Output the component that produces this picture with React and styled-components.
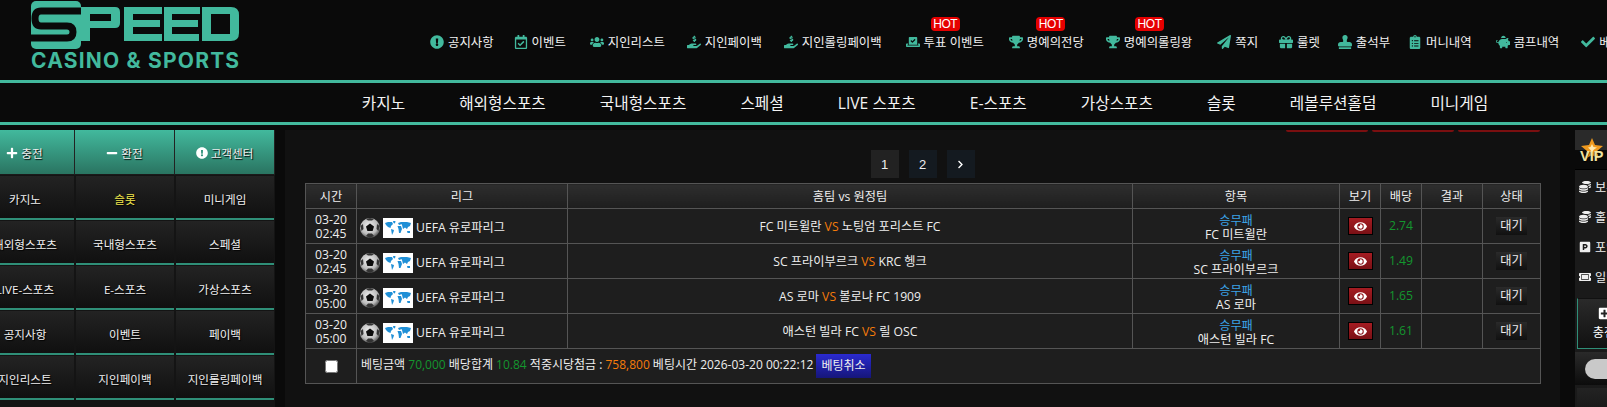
import React from "react";
import styled, { createGlobalStyle } from "styled-components";
import {
  FaExclamationCircle, FaRegCalendarCheck, FaUsers, FaHandHoldingUsd, FaVoteYea, FaTrophy,
  FaPaperPlane, FaGift, FaStamp, FaClipboardList, FaPiggyBank, FaCheck, FaPlus, FaMinus, FaEye,
  FaCoins, FaParking, FaTicketAlt, FaChevronRight, FaPlusSquare,
} from "react-icons/fa";

const TEAL = "#42b99d";

const GlobalStyle = createGlobalStyle`
  html, body { margin: 0; padding: 0; background: #0a0a0a; overflow: hidden; }
  body { font-family: "Open Sans", "Noto Sans CJK KR", "Liberation Sans", sans-serif; color: #fff; }
`;

const Page = styled.div`
  width: 1607px;
  height: 407px;
  overflow: hidden;
`;

const Header = styled.header`
  height: 80px;
  display: flex;
  align-items: flex-start;
  background: #0a0a0a;
  border-bottom: 3px solid ${TEAL};
`;

const Logo = styled.div`
  width: 430px;
  flex: none;
  padding-left: 30px;
  box-sizing: border-box;
`;

const LogoSub = styled.div`
  margin-left: 1px;
  font-family: "Inter", "Liberation Sans", sans-serif;
  font-weight: 700;
  font-size: 21px;
  line-height: 24px;
  letter-spacing: 1.2px;
  color: ${TEAL};
  white-space: nowrap;
`;

const TopMenu = styled.nav`
  display: flex;
  gap: 22px;
  padding-top: 33px;
  white-space: nowrap;
`;

const TopItem = styled.a`
  position: relative;
  display: flex;
  align-items: center;
  gap: 4px;
  height: 18px;
  margin-left: ${(p) => p.$nudge || 0}px;
  font-size: 12.4px;
  color: #f2f2f2;
  svg { color: ${TEAL}; font-size: 14px; flex: none; }
`;

const Hot = styled.span`
  position: absolute;
  top: -16px;
  left: 50%;
  margin-left: ${(p) => p.$shift - 14}px;
  width: 29px;
  height: 14px;
  border-radius: 4px;
  background: #e60000;
  color: #fff;
  font-family: "Liberation Sans", sans-serif;
  font-size: 12px;
  letter-spacing: -0.4px;
  line-height: 14px;
  text-align: center;
`;

const GameNav = styled.nav`
  height: 39px;
  display: flex;
  justify-content: center;
  align-items: center;
  gap: 54px;
  padding-left: 243px;
  background: #0a0a0a;
  border-bottom: 3px solid ${TEAL};
  font-size: 15.7px;
  color: #f4f4f4;
  white-space: nowrap;
`;

const Body = styled.div`
  display: flex;
  height: 282px;
  padding-top: 5px;
  box-sizing: border-box;
`;

const SideMenu = styled.aside`
  flex: none;
  width: 300px;
  margin-left: -25px;
  display: grid;
  grid-template-columns: repeat(3, 100px);
  grid-auto-rows: 45px;
  align-content: start;
  background: #141414;
`;

const ActionCell = styled.a`
  display: flex;
  align-items: center;
  justify-content: center;
  gap: 3px;
  box-sizing: border-box;
  padding-top: 1px;
  border-right: 1px solid #222;
  border-bottom: 1px solid #1a1a1a;
  background: linear-gradient(#42b99d, #2a7461);
  font-size: 11.6px;
  color: #eee;
  text-shadow: 1px 1px 1px #000;
  svg { color: #fff; font-size: 12px; }
`;

const MenuCell = styled.a`
  display: flex;
  align-items: center;
  justify-content: center;
  box-sizing: border-box;
  margin: 1px 1px 0 1px;
  padding-top: 3px;
  border-bottom: 2px solid #2f8f78;
  background: linear-gradient(#232323, #101010);
  font-size: 11.6px;
  color: ${(p) => (p.$active ? "#f2e94e" : "#f0f0f0")};
  white-space: nowrap;
  text-shadow: 1px 1px 1px #000;
`;

const Content = styled.main`
  flex: none;
  width: 1275px;
  margin-left: 10px;
  background: #111;
  box-sizing: border-box;
  padding: 0 20px;
`;

const RedTabs = styled.div`
  display: flex;
  justify-content: flex-end;
  gap: 4px;
  height: 2px;
`;

const RedTab = styled.span`
  width: 82px;
  background: #7a0f10;
  border-radius: 0 0 5px 5px;
`;

const Pager = styled.div`
  display: flex;
  justify-content: center;
  gap: 10px;
  padding: 18px 0 5px;
`;

const PageBtn = styled.a`
  width: 28px;
  height: 28px;
  display: flex;
  align-items: center;
  justify-content: center;
  background: ${(p) => (p.$active ? "#222" : "#141a20")};
  color: #eee;
  font-size: 13px;
  font-family: "Liberation Sans", sans-serif;
  svg { font-size: 9px; color: #fff; }
`;

const BetTable = styled.table`
  width: 1235px;
  border-collapse: collapse;
  table-layout: fixed;
  font-size: 12.2px;
  color: #eee;
  background: #1e1e1e;
  th, td { border: 1px solid #555; padding: 0; text-align: center; }
  th { height: 24px; font-weight: 400; background: linear-gradient(#2e2e2e, #1e1e1e); }
  tbody tr { height: 35px; }
  td { line-height: 14px; }
`;

const TextCell = styled.td`
  && { padding-top: ${(p) => p.$top || 2}px; }
`;

const LeagueCell = styled.div`
  display: flex;
  align-items: center;
  gap: 3px;
  padding-left: 3px;
`;

const BallIcon = styled.svg`
  width: 20px;
  height: 20px;
  flex: none;
`;

const WorldFlag = styled.svg`
  width: 30px;
  height: 20px;
  flex: none;
  background: #fff;
`;

const Vs = styled.span`
  color: #f57c0a;
`;

const MarketName = styled.span`
  color: #3ba3e8;
`;

const EyeBtn = styled.a`
  display: inline-flex;
  align-items: center;
  justify-content: center;
  box-sizing: border-box;
  width: 25px;
  height: 18px;
  vertical-align: middle;
  background: linear-gradient(#a51c22, #7a1015);
  border: 1px solid #000;
  color: #fff;
  font-size: 13px;
`;

const Odds = styled.span`
  color: #14962e;
`;

const StatusBtn = styled.a`
  display: inline-block;
  width: 31px;
  height: 18px;
  line-height: 18px;
  vertical-align: middle;
  background: linear-gradient(#2a2a2a, #111);
  color: #eee;
`;

const Checkbox = styled.input`
  width: 13px;
  height: 13px;
  margin: 0;
  vertical-align: middle;
`;

const SummaryCell = styled.td`
  && { text-align: left; padding-left: 4px; font-size: 12px; }
`;

const Green = styled.span`
  color: #14962e;
`;

const Orange = styled.span`
  color: #f57c0a;
`;

const CancelBtn = styled.a`
  display: inline-block;
  padding: 0 5px;
  height: 24px;
  line-height: 24px;
  vertical-align: middle;
  background: linear-gradient(#2a2ad0, #16167a);
  color: #eee;
`;

const RightBar = styled.aside`
  flex: none;
  width: 80px;
  margin-left: 15px;
  background: #1a1a1a;
`;

const VipBox = styled.div`
  position: relative;
  height: 40px;
  background: linear-gradient(#2a2a2a 50%, #0a0a0a 50%);
  border-bottom: 1px solid #000;
  box-sizing: border-box;
  margin-bottom: 2px;
  padding: 8px 0 0 5px;
`;

const VipText = styled.span`
  position: absolute;
  left: 5px;
  top: 18px;
  font-family: "Liberation Sans", sans-serif;
  font-weight: 700;
  font-size: 14.5px;
  color: #f0e3a0;
  text-shadow: 0 1px 1px #000;
`;

const RightLine = styled.div`
  display: flex;
  align-items: center;
  gap: 4px;
  height: 30px;
  padding-left: 4px;
  font-size: 12.2px;
  white-space: nowrap;
  color: #eee;
  svg { font-size: 12px; color: #eee; flex: none; }
`;

const ChargeBox = styled.div`
  margin: 6px 0 0 2px;
  width: 54px;
  height: 51px;
  box-sizing: border-box;
  border: 1px solid #2f8f78;
  border-top-color: #111;
  background: linear-gradient(#2a2a2a, #111);
  display: flex;
  flex-direction: column;
  align-items: center;
  justify-content: center;
  gap: 3px;
  font-size: 12.2px;
  svg { font-size: 13px; color: #fff; }
`;

const ToggleRow = styled.div`
  margin-top: 3px;
  height: 33px;
  background: linear-gradient(#2a2a2a, #0c0c0c);
  padding: 7px 0 0 10px;
  box-sizing: border-box;
`;

const TogglePill = styled.div`
  height: 20px;
  border-radius: 10px 0 0 10px;
  background: #c9c9c9;
`;

const BottomBox = styled.div`
  margin: 3px 0 0 2px;
  height: 30px;
  background: linear-gradient(#232323, #151515);
`;

const topItems = [
  { Icon: FaExclamationCircle, label: "공지사항" },
  { Icon: FaRegCalendarCheck, label: "이벤트", nudge: -2 },
  { Icon: FaUsers, label: "지인리스트", nudge: 2 },
  { Icon: FaHandHoldingUsd, label: "지인페이백" },
  { Icon: FaHandHoldingUsd, label: "지인롤링페이백" },
  { Icon: FaVoteYea, label: "투표 이벤트", nudge: 2, hot: 0 },
  { Icon: FaTrophy, label: "명예의전당", nudge: 3, hot: 4 },
  { Icon: FaTrophy, label: "명예의롤링왕", hot: 0 },
  { Icon: FaPaperPlane, label: "쪽지", nudge: 3 },
  { Icon: FaGift, label: "룰렛", nudge: -1 },
  { Icon: FaStamp, label: "출석부", nudge: -4 },
  { Icon: FaClipboardList, label: "머니내역", nudge: -4 },
  { Icon: FaPiggyBank, label: "콤프내역", nudge: 2 },
  { Icon: FaCheck, label: "베팅내역" },
];

const games = ["카지노", "해외형스포츠", "국내형스포츠", "스페셜", "LIVE 스포츠", "E-스포츠", "가상스포츠", "슬롯", "레볼루션홀덤", "미니게임"];

const menu = ["카지노", "슬롯", "미니게임", "해외형스포츠", "국내형스포츠", "스페셜", "LIVE-스포츠", "E-스포츠", "가상스포츠", "공지사항", "이벤트", "페이백", "지인리스트", "지인페이백", "지인롤링페이백"];

const bets = [
  ["03-20", "02:45", "FC 미트윌란", "노팅엄 포리스트 FC", "FC 미트윌란", "2.74"],
  ["03-20", "02:45", "SC 프라이부르크", "KRC 헹크", "SC 프라이부르크", "1.49"],
  ["03-20", "05:00", "AS 로마", "볼로냐 FC 1909", "AS 로마", "1.65"],
  ["03-20", "05:00", "애스턴 빌라 FC", "릴 OSC", "애스턴 빌라 FC", "1.61"],
];

const LogoMark = () => (
  <svg width="210" height="49" viewBox="0 0 210 49" style={{ display: "block" }}>
    <rect x="1" y="1" width="50" height="48" rx="5" fill={TEAL} />
    <path fill="none" stroke="#0a0a0a" strokeWidth="7" d="M51 11H11Q5 11 5 18.5Q5 26 11 26H37Q43 26 43 32Q43 38 37 38H1" />
    <path fill={TEAL} fillRule="evenodd" d="M51 7H85Q90 7 90 12V23Q90 28 85 28H60V41H51ZM60 14V21H81V14Z" />
    <path fill={TEAL} d="M94 7H132V14H103V20H130V27H103V34H132V41H94Z" />
    <path fill={TEAL} d="M134 7H170V14H142V20H168V27H142V34H169V41H134Z" />
    <path fill={TEAL} fillRule="evenodd" d="M172 7H201Q209 7 209 15V33Q209 41 201 41H172ZM181 14V34H200V14Z" />
  </svg>
);

const SoccerBall = () => (
  <BallIcon viewBox="0 0 20 20">
    <defs>
      <radialGradient id="ballShade" cx="45%" cy="40%" r="60%">
        <stop offset="0%" stopColor="#f2f2f2" />
        <stop offset="70%" stopColor="#bbb" />
        <stop offset="100%" stopColor="#555" />
      </radialGradient>
    </defs>
    <circle cx="10" cy="10" r="10" fill="url(#ballShade)" />
    <path fill="#0c0c0c" d="M10 5.5L14 8.5L12.6 13H7.4L6 8.5Z" />
    <path fill="#333" d="M6 1L10 0L14 1L12 2.5H8ZM0.5 8L3 6L3.5 11L1.5 13ZM19.5 8L17 6L16.5 11L18.5 13ZM6 18L8 15.5H12L14 18L10 20Z" />
  </BallIcon>
);

const WorldMap = () => (
  <WorldFlag viewBox="0 0 30 20">
    <path fill="#1f8fd6" d="M2 5L5 4L9 4L10 6L8 8L7.5 10L5 9L3 7ZM10 3L12.5 3L12 5.5L10.5 5ZM8 11L11 12L10.5 14L9 17L8.5 14ZM15 5L18 4L19 6L16 7ZM14.5 8L18 8L19 11L17.5 15L16 15L15.5 11ZM18 4L24 4L28 5L27 8L25 9L24 11L22 9.5L20 11L19 7ZM24 13L27 13L27 15L24.5 15Z" />
  </WorldFlag>
);

const VipStar = () => (
  <svg width="24" height="22" viewBox="0 0 24 22">
    <path fill="#f09a1e" d="M12 0L15 7L23 8L17 13L19 21L12 17L5 21L7 13L1 8L9 7Z" />
    <path fill="#ffe9b0" d="M12 6L13.5 9L17 9.5L14 11.5L12 14L10 11.5L8 9.5L10.5 9Z" />
  </svg>
);

const App = () => (
  <Page>
    <GlobalStyle />
    <Header>
      <Logo>
        <LogoMark />
        <LogoSub>CASINO &amp; SPORTS</LogoSub>
      </Logo>
      <TopMenu>
        {topItems.map(({ Icon, label, nudge, hot }) => (
          <TopItem key={label} $nudge={nudge}>
            {hot !== undefined && <Hot $shift={hot}>HOT</Hot>}
            <Icon />
            {label}
          </TopItem>
        ))}
      </TopMenu>
    </Header>
    <GameNav>
      {games.map((g) => <a key={g}>{g}</a>)}
    </GameNav>
    <Body>
      <SideMenu>
        <ActionCell><FaPlus />충전</ActionCell>
        <ActionCell><FaMinus />환전</ActionCell>
        <ActionCell><FaExclamationCircle />고객센터</ActionCell>
        {menu.map((m) => <MenuCell key={m} $active={m === "슬롯"}>{m}</MenuCell>)}
      </SideMenu>
      <Content>
        <RedTabs><RedTab /><RedTab /><RedTab /></RedTabs>
        <Pager>
          <PageBtn $active>1</PageBtn>
          <PageBtn>2</PageBtn>
          <PageBtn><FaChevronRight /></PageBtn>
        </Pager>
        <BetTable>
          <colgroup>
            <col style={{ width: 51 }} /><col style={{ width: 211 }} /><col style={{ width: 565 }} /><col style={{ width: 207 }} />
            <col style={{ width: 41 }} /><col style={{ width: 41 }} /><col style={{ width: 61 }} /><col style={{ width: 58 }} />
          </colgroup>
          <thead>
            <tr><th>시간</th><th>리그</th><th>홈팀 vs 원정팀</th><th>항목</th><th>보기</th><th>배당</th><th>결과</th><th>상태</th></tr>
          </thead>
          <tbody>
            {bets.map((b, i) => (
              <tr key={i}>
                <TextCell>{b[0]}<br />{b[1]}</TextCell>
                <TextCell $top={3}>
                  <LeagueCell>
                    <SoccerBall />
                    <WorldMap />
                    UEFA 유로파리그
                  </LeagueCell>
                </TextCell>
                <TextCell>{b[2]} <Vs>VS</Vs> {b[3]}</TextCell>
                <TextCell $top={3}><MarketName>승무패</MarketName><br />{b[4]}</TextCell>
                <td><EyeBtn><FaEye /></EyeBtn></td>
                <td><Odds>{b[5]}</Odds></td>
                <td></td>
                <td><StatusBtn>대기</StatusBtn></td>
              </tr>
            ))}
            <tr>
              <td><Checkbox type="checkbox" /></td>
              <SummaryCell colSpan={7}>
                베팅금액 <Green>70,000</Green> 배당합계 <Green>10.84</Green> 적중시당첨금 : <Orange>758,800</Orange> 베팅시간 2026-03-20 00:22:12 <CancelBtn>베팅취소</CancelBtn>
              </SummaryCell>
            </tr>
          </tbody>
        </BetTable>
      </Content>
      <RightBar>
        <VipBox><VipStar /><VipText>VIP</VipText></VipBox>
        <RightLine><FaCoins />보유머니</RightLine>
        <RightLine><FaCoins />홀덤머니</RightLine>
        <RightLine><FaParking />포인트</RightLine>
        <RightLine><FaTicketAlt />일반쿠폰</RightLine>
        <ChargeBox><FaPlusSquare />충전</ChargeBox>
        <ToggleRow><TogglePill /></ToggleRow>
        <BottomBox />
      </RightBar>
    </Body>
  </Page>
);

export default App;
